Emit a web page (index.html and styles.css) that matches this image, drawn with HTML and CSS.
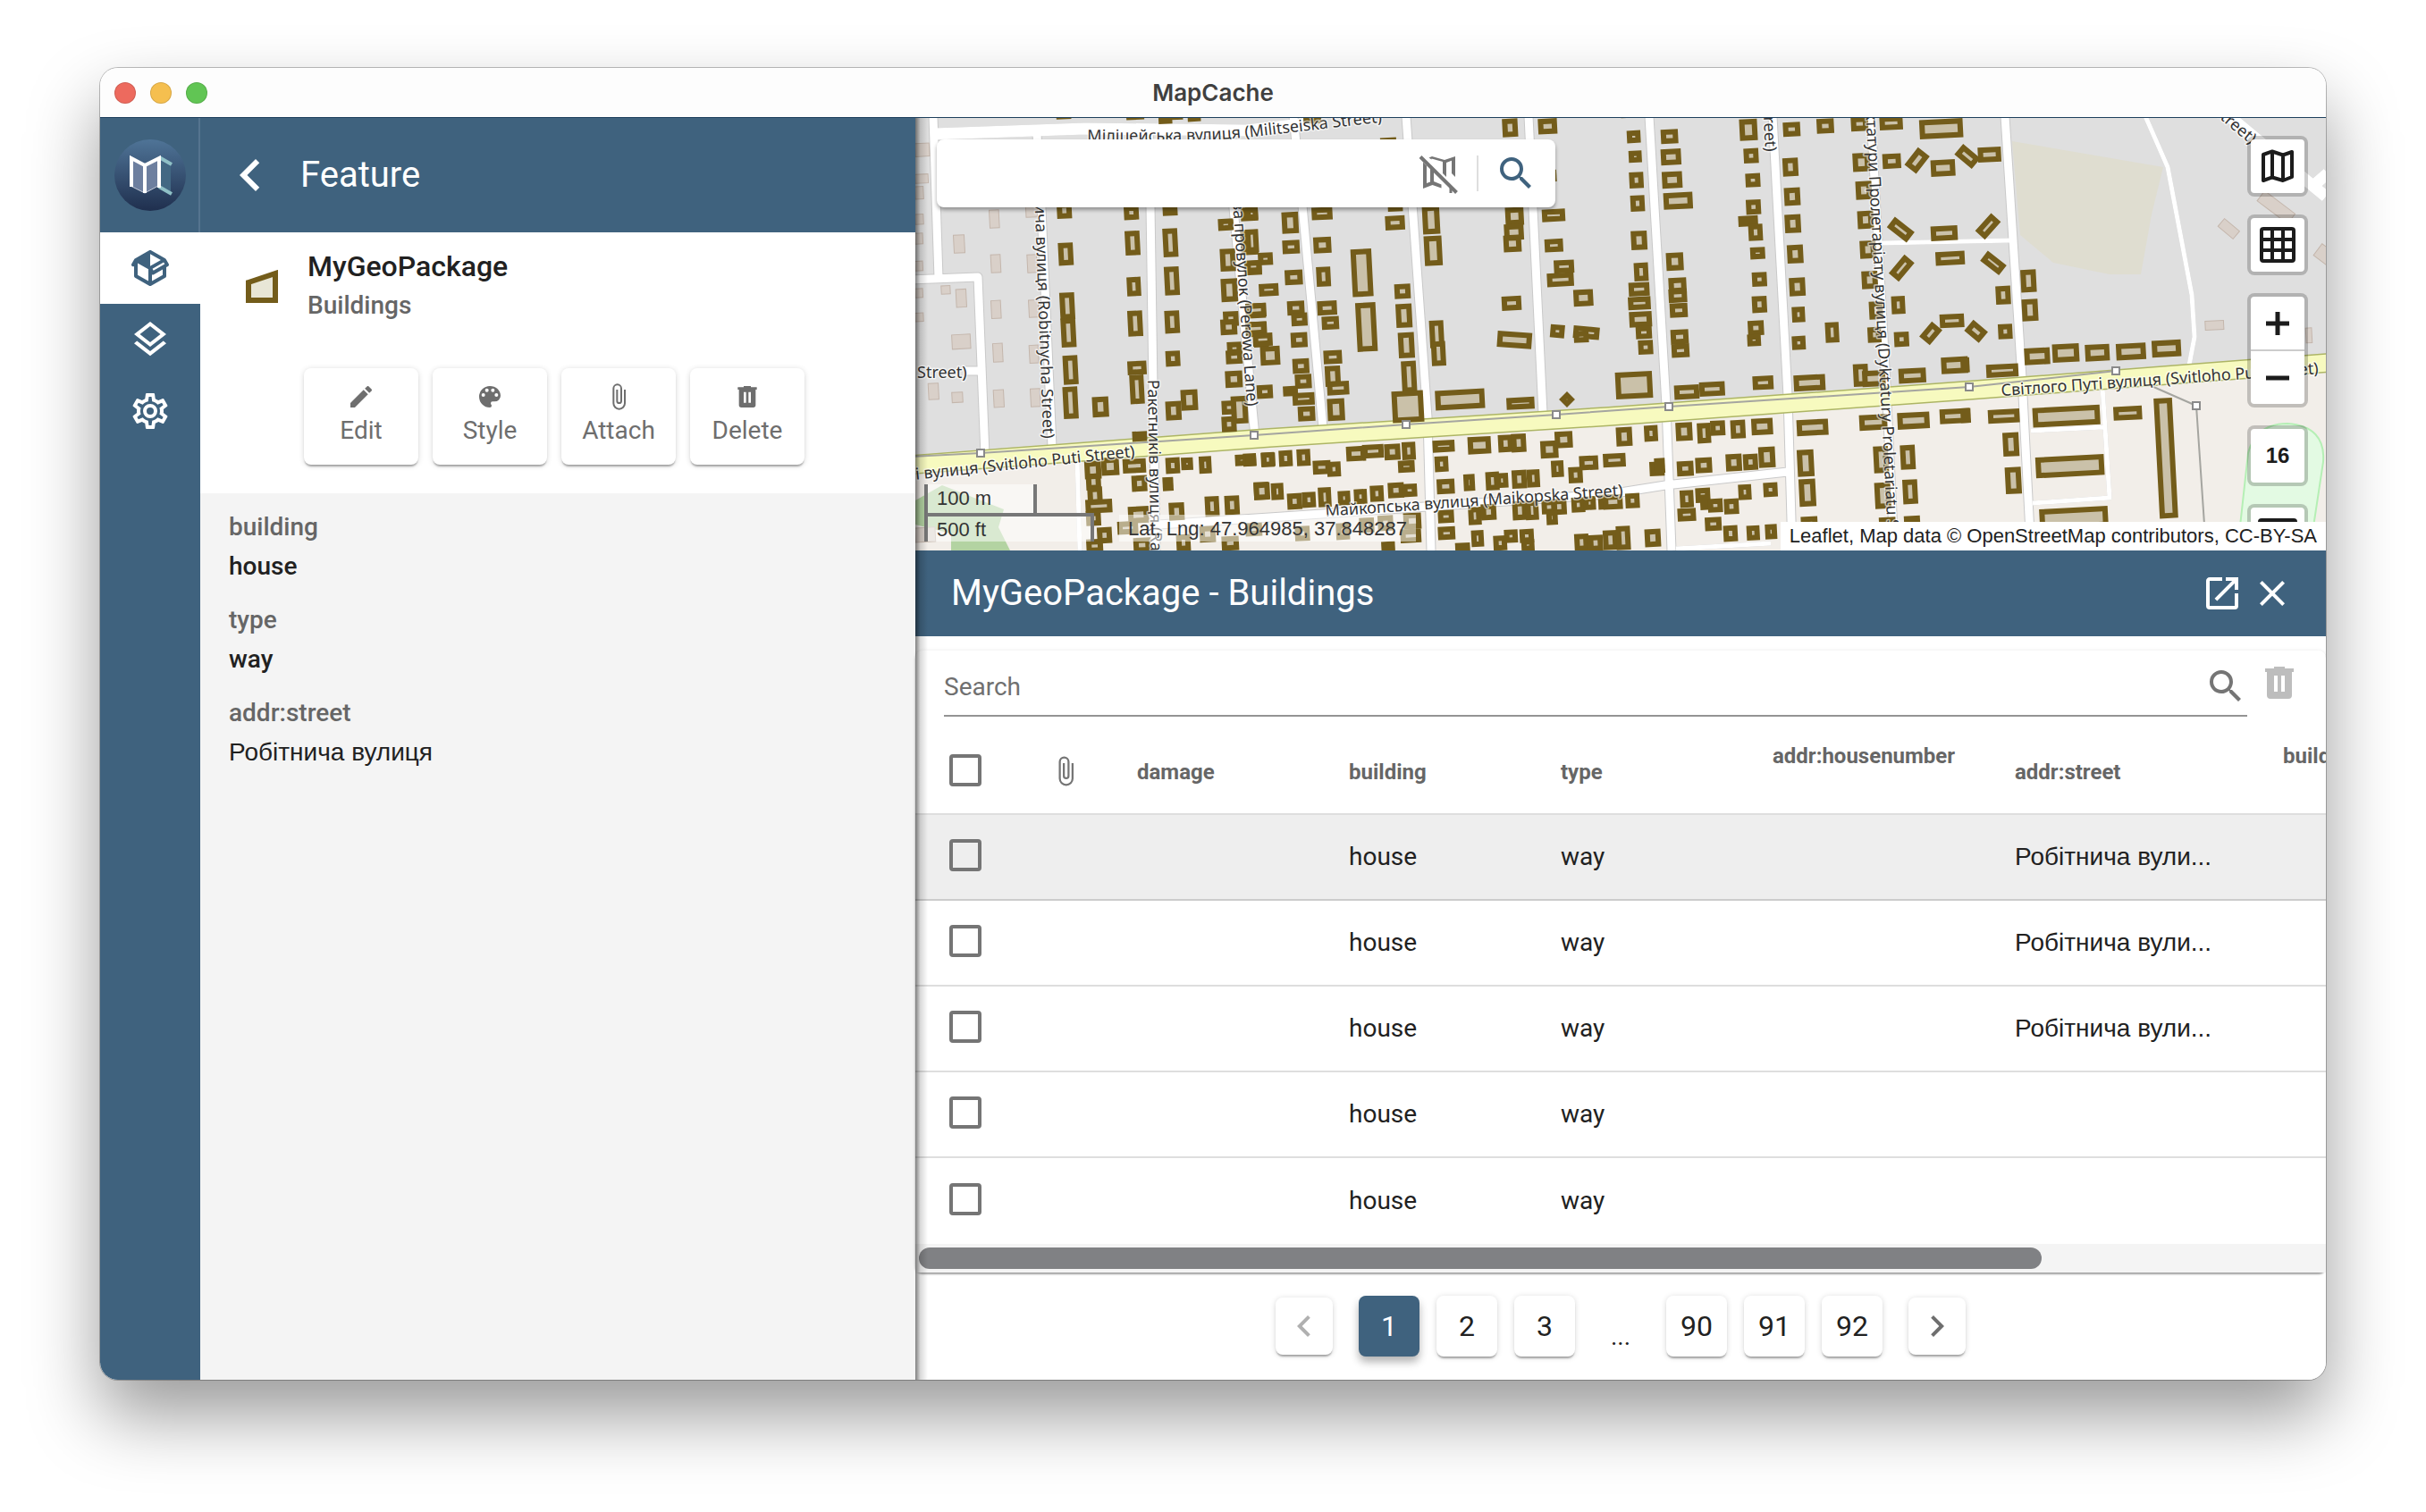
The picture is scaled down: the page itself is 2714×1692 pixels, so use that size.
FILE: index.html
```html
<!DOCTYPE html>
<html lang="en">
<head>
<meta charset="utf-8">
<title>MapCache</title>
<link rel="stylesheet" href="styles.css">
</head>
<body>
<svg width="0" height="0" class="sprite" aria-hidden="true">
  <symbol id="i-package" viewBox="0 0 24 24"><path d="M2,10.96C1.5,10.68 1.35,10.07 1.63,9.59L3.13,7C3.24,6.8 3.41,6.66 3.6,6.58L11.43,2.18C11.59,2.06 11.79,2 12,2C12.21,2 12.41,2.06 12.57,2.18L20.47,6.62C20.66,6.72 20.82,6.88 20.91,7.08L22.36,9.6C22.64,10.08 22.47,10.69 22,10.96L21,11.54V16.5C21,16.88 20.79,17.21 20.47,17.38L12.57,21.82C12.41,21.94 12.21,22 12,22C11.79,22 11.59,21.94 11.43,21.82L3.53,17.38C3.21,17.21 3,16.88 3,16.5V10.96C2.7,11.13 2.32,11.14 2,10.96M12,4.15L12,10.85L17.96,7.5L12,4.15M5,15.91L11,19.29V12.58L5,9.21V15.91M19,15.91V12.69L14,15.59C13.67,15.77 13.3,15.76 13,15.6V19.29L19,15.91M13.85,13.36L20.13,9.73L19.55,8.72L13.27,12.35L13.85,13.36Z"/></symbol>
  <symbol id="i-layers" viewBox="0 0 24 24"><path d="M12,18.54L19.37,12.8L21,14.07L12,21.07L3,14.07L4.62,12.81L12,18.54M12,16L3,9L12,2L21,9L12,16M12,4.53L6.26,9L12,13.47L17.74,9L12,4.53Z"/></symbol>
  <symbol id="i-cog" viewBox="0 0 24 24"><path d="M12,8A4,4 0 0,1 16,12A4,4 0 0,1 12,16A4,4 0 0,1 8,12A4,4 0 0,1 12,8M12,10A2,2 0 0,0 10,12A2,2 0 0,0 12,14A2,2 0 0,0 14,12A2,2 0 0,0 12,10M10,22C9.75,22 9.54,21.82 9.5,21.58L9.13,18.93C8.5,18.68 7.96,18.34 7.44,17.94L4.95,18.95C4.73,19.03 4.46,18.95 4.34,18.73L2.34,15.27C2.21,15.05 2.27,14.78 2.46,14.63L4.57,12.97L4.5,12L4.57,11L2.46,9.37C2.27,9.22 2.21,8.95 2.34,8.73L4.34,5.27C4.46,5.05 4.73,4.96 4.95,5.05L7.44,6.05C7.96,5.66 8.5,5.32 9.13,5.07L9.5,2.42C9.54,2.18 9.75,2 10,2H14C14.25,2 14.46,2.18 14.5,2.42L14.87,5.07C15.5,5.32 16.04,5.66 16.56,6.05L19.05,5.05C19.27,4.96 19.54,5.05 19.66,5.27L21.66,8.73C21.79,8.95 21.73,9.22 21.54,9.37L19.43,11L19.5,12L19.43,13L21.54,14.63C21.73,14.78 21.79,15.05 21.66,15.27L19.66,18.73C19.54,18.95 19.27,19.04 19.05,18.95L16.56,17.95C16.04,18.34 15.5,18.68 14.87,18.93L14.5,21.58C14.46,21.82 14.25,22 14,22H10M11.25,4L10.88,6.61C9.68,6.86 8.62,7.5 7.85,8.39L5.44,7.35L4.69,8.65L6.8,10.2C6.4,11.37 6.4,12.64 6.8,13.8L4.68,15.36L5.43,16.66L7.86,15.62C8.63,16.5 9.68,17.14 10.87,17.38L11.24,20H12.76L13.13,17.39C14.32,17.14 15.37,16.5 16.14,15.62L18.57,16.66L19.32,15.36L17.2,13.81C17.6,12.64 17.6,11.37 17.2,10.2L19.31,8.65L18.56,7.35L16.15,8.39C15.38,7.5 14.32,6.86 13.12,6.62L12.75,4H11.25Z"/></symbol>
  <symbol id="i-left" viewBox="0 0 24 24"><path d="M15.41,16.58L10.83,12L15.41,7.41L14,6L8,12L14,18L15.41,16.58Z"/></symbol>
  <symbol id="i-right" viewBox="0 0 24 24"><path d="M8.59,16.58L13.17,12L8.59,7.41L10,6L16,12L10,18L8.59,16.58Z"/></symbol>
  <symbol id="i-pencil" viewBox="0 0 24 24"><path d="M20.71,7.04C21.1,6.65 21.1,6 20.71,5.63L18.37,3.29C18,2.9 17.35,2.9 16.96,3.29L15.12,5.12L18.87,8.87M3,17.25V21H6.75L17.81,9.93L14.06,6.18L3,17.25Z"/></symbol>
  <symbol id="i-palette" viewBox="0 0 24 24"><path d="M17.5,12A1.5,1.5 0 0,1 16,10.5A1.5,1.5 0 0,1 17.5,9A1.5,1.5 0 0,1 19,10.5A1.5,1.5 0 0,1 17.5,12M14.5,8A1.5,1.5 0 0,1 13,6.5A1.5,1.5 0 0,1 14.5,5A1.5,1.5 0 0,1 16,6.5A1.5,1.5 0 0,1 14.5,8M9.5,8A1.5,1.5 0 0,1 8,6.5A1.5,1.5 0 0,1 9.5,5A1.5,1.5 0 0,1 11,6.5A1.5,1.5 0 0,1 9.5,8M6.5,12A1.5,1.5 0 0,1 5,10.5A1.5,1.5 0 0,1 6.5,9A1.5,1.5 0 0,1 8,10.5A1.5,1.5 0 0,1 6.5,12M12,3A9,9 0 0,0 3,12A9,9 0 0,0 12,21A1.5,1.5 0 0,0 13.5,19.5C13.5,19.11 13.35,18.76 13.11,18.5C12.88,18.23 12.73,17.88 12.73,17.5A1.5,1.5 0 0,1 14.23,16H16A5,5 0 0,0 21,11C21,6.58 16.97,3 12,3Z"/></symbol>
  <symbol id="i-clip" viewBox="0 0 24 24"><path d="M16.5,6V17.5A4,4 0 0,1 12.5,21.5A4,4 0 0,1 8.5,17.5V5A2.5,2.5 0 0,1 11,2.5A2.5,2.5 0 0,1 13.5,5V15.5A1,1 0 0,1 12.5,16.5A1,1 0 0,1 11.5,15.5V6H10V15.5A2.5,2.5 0 0,0 12.5,18A2.5,2.5 0 0,0 15,15.5V5A4,4 0 0,0 11,1A4,4 0 0,0 7,5V17.5A5.5,5.5 0 0,0 12.5,23A5.5,5.5 0 0,0 18,17.5V6H16.5Z"/></symbol>
  <symbol id="i-trash" viewBox="0 0 24 24"><path d="M9,3V4H4V6H5V19A2,2 0 0,0 7,21H17A2,2 0 0,0 19,19V6H20V4H15V3H9M9,8H11V17H9V8M13,8H15V17H13V8Z"/></symbol>
  <symbol id="i-search" viewBox="0 0 24 24"><path d="M9.5,3A6.5,6.5 0 0,1 16,9.5C16,11.11 15.41,12.59 14.44,13.73L14.71,14H15.5L20.5,19L19,20.5L14,15.5V14.71L13.73,14.44C12.59,15.41 11.11,16 9.5,16A6.5,6.5 0 0,1 3,9.5A6.5,6.5 0 0,1 9.5,3M9.5,5C7,5 5,7 5,9.5C5,12 7,14 9.5,14C12,14 14,12 14,9.5C14,7 12,5 9.5,5Z"/></symbol>
  <symbol id="i-open" viewBox="0 0 24 24"><path d="M14,3V5H17.59L7.76,14.83L9.17,16.24L19,6.41V10H21V3M19,19H5V5H12V3H5C3.89,3 3,3.9 3,5V19A2,2 0 0,0 5,21H19A2,2 0 0,0 21,19V12H19V19Z"/></symbol>
  <symbol id="i-close" viewBox="0 0 24 24"><path d="M19,6.41L17.59,5L12,10.59L6.41,5L5,6.41L10.59,12L5,17.59L6.41,19L12,13.41L17.59,19L19,17.59L13.41,12L19,6.41Z"/></symbol>
  <symbol id="i-map-off" viewBox="0 0 48 48"><path d="M6 11.500V41l10.500-4 10 3.500v-4L18 33V20l-4-4v17.500l-4 1.500V15.500zM12.500 6.500l3 2V7.500L28 11v13l4 4V12l6-2.300V24l4 4V5l-12 4-14-4z"/><path d="M3 5.500 43.500 45.500" stroke="currentColor" stroke-width="4" fill="none"/><path d="M37 38v8" stroke="currentColor" stroke-width="3"/></symbol>
  <symbol id="i-map" viewBox="0 0 48 48"><path d="M8 11 18 7.500 30 11.500 40 8V36L30 40 18 36.500 8 40ZM18 8V36M30 12V39" fill="none" stroke="currentColor" stroke-width="4" stroke-linejoin="round"/></symbol>
  <symbol id="i-grid" viewBox="0 0 48 48"><path d="M8 4H40A4 4 0 0 1 44 8V40A4 4 0 0 1 40 44H8A4 4 0 0 1 4 40V8A4 4 0 0 1 8 4M8 8V16H16V8ZM20 8V16H28V8ZM32 8V16H40V8ZM8 20V28H16V20ZM20 20V28H28V20ZM32 20V28H40V20ZM8 32V40H16V32ZM20 32V40H28V32ZM32 32V40H40V32Z" fill-rule="evenodd"/></symbol>
</svg>

<div class="window">
  <header class="titlebar">
    <div class="lights"><span class="light red"></span><span class="light amber"></span><span class="light green"></span></div>
    <h1 class="app-name">MapCache</h1>
  </header>
  <div class="app">
    <nav class="rail" aria-label="Main">
      <div class="brand">
        <svg class="logo" viewBox="0 0 80 80" aria-hidden="true">
          <defs><linearGradient id="lg" x1="0" y1="0" x2="0" y2="1"><stop offset="0" stop-color="#4f7497"/><stop offset="1" stop-color="#1f2f4e"/></linearGradient></defs>
          <circle cx="40" cy="40" r="40" fill="url(#lg)"/>
          <path d="M18 20 34 28V60L18 52ZM34 28 49 20V52L34 60Z" fill="#6d7f9f"/>
          <path d="M51 24 63 30V58L51 52Z" fill="#426883"/>
          <path d="M50 20 64 28M50 53 64 61" stroke="#8fc0c6" stroke-width="4" fill="none"/>
          <path d="M18 52 34 60 49 52" fill="none" stroke="#c4cbd9" stroke-width="1"/>
          <path d="M19 53V21L34 29 50 21V54M34 29V60" fill="none" stroke="#fff" stroke-width="4"/>
        </svg>
      </div>
      <a class="rail-item active" href="#geopackages" aria-label="GeoPackages"><svg class="icon"><use href="#i-package"/></svg></a>
      <a class="rail-item" href="#layers" aria-label="Layers"><svg class="icon"><use href="#i-layers"/></svg></a>
      <a class="rail-item" href="#settings" aria-label="Settings"><svg class="icon"><use href="#i-cog"/></svg></a>
    </nav>

    <section class="panel">
      <div class="panel-bar">
        <button class="plain" aria-label="Back"><svg class="icon-xl"><use href="#i-left"/></svg></button>
        <h2 class="bar-title">Feature</h2>
      </div>
      <div class="summary">
        <div class="ident">
          <svg class="geom" viewBox="0 0 36 38" aria-hidden="true"><path d="M3 14 33 4V34H3Z" fill="#e8e6d6" stroke="#735c1a" stroke-width="6"/></svg>
          <div>
            <h3 class="name">MyGeoPackage</h3>
            <p class="table-name">Buildings</p>
          </div>
        </div>
        <div class="actions">
          <button class="action"><svg class="icon-s"><use href="#i-pencil"/></svg>Edit</button>
          <button class="action"><svg class="icon-s"><use href="#i-palette"/></svg>Style</button>
          <button class="action"><svg class="icon-s"><use href="#i-clip"/></svg>Attach</button>
          <button class="action"><svg class="icon-s"><use href="#i-trash"/></svg>Delete</button>
        </div>
      </div>
      <dl class="attrs">
        <div><dt>building</dt><dd>house</dd></div>
        <div><dt>type</dt><dd>way</dd></div>
        <div><dt>addr:street</dt><dd class="cyr">Робітнича вулиця</dd></div>
      </dl>
    </section>

    <main class="main">
      <section class="map" aria-label="Map">
        <svg class="map-canvas" viewBox="0 0 1578 484" preserveAspectRatio="xMidYMid slice">
          <rect width="1578" height="484" fill="#dfdfdf"/>
          <path d="M0 388 396 358 776 334 1176 305 1578 275V484H0Z" fill="#f2eee9"/>
          <path d="M1227 26 1396 55 1383 108 1371 175 1336 175 1273 162 1236 131Z" fill="#dfddd0"/>
          <path d="M0 428 30 411 99 438 93 458 106 484H40V465L0 455Z" fill="#b3d3a2"/>
          <path d="M1479 484 1491 375Q1500 342 1535 342 1578 345 1575 385L1560 484Z" fill="#e3fae3" stroke="#b5efb5" stroke-width="2"/>
          <g class="casing">
            <path id="roads" d="M20-2 26 179M-4 181 70 178 78 377M56 283H73M136 18 141 101 153 368M261 10 263 98 267 370 269 484M350 16 356 101 380 357M423-2 433 98 456 347M549-2 573 335 577 484M686-2 702 330M821-2 840 321 846 484M959-2 976 311 981 484M1069-2 1086 298 1095 484M1219-2 1238 291 1248 484M272 455 396 447 776 421 839 411 976 396"/>
            <path id="wide" d="M20 18 190 12 370 14 440 6M1460-10 1578 88M1565 75 1580 62"/>
            <path id="lanes" d="M1081 140 1226 137M1376-2 1401 55 1428 198 1431 245 1424 282M1328 301 1336 425 1250 431M1248 350 1329 346M181 381 184 484M851 482 957 476"/>
          </g>
          <g class="surface"><use href="#roads"/><use href="#wide"/><use href="#lanes"/></g>
          <path class="main-casing" d="M-4 388 396 358 776 334 1176 305 1582 274"/>
          <path class="main-road" d="M-4 388 396 358 776 334 1176 305 1582 274"/>
          <path class="power" d="M-4 379 73 375 379 355 549 343 717 332 843 323 1179 301 1343 283M1383 300 1433 322 1444 484"/>
          <g id="plain-buildings" class="plain-buildings"></g>
          <g id="buildings" class="buildings"></g>
          <g id="nodes" class="nodes"></g>
          <g class="labels">
            <path id="curve" d="M192 26C260 26 320 27 378 21L545 2" fill="none" stroke="none"/>
            <text><textPath href="#curve">Міліцейська вулиця (Militseiska Street)</textPath></text>
            <text x="2" y="291">Street)</text>
            <text class="end" transform="translate(143 359) rotate(88)">Робітнича вулиця (Robitnycha Street)</text>
            <text transform="translate(260 293) rotate(89)">Ракетників вулиця (Raketnykiv Street)</text>
            <text class="end" transform="translate(371 323) rotate(86)">Перова провулок (Perowa Lane)</text>
            <text class="end" transform="translate(951 38) rotate(87)">Street)</text>
            <text transform="translate(1062 -31) rotate(87)">Диктатури Пролетаріату вулиця (Dyktatury Proletariatu Street)</text>
            <text transform="translate(1215 311) rotate(-4)">Світлого Путі вулиця (Svitloho Puti Street)</text>
            <text class="end" transform="translate(246 379) rotate(-6)">Світлого Путі вулиця (Svitloho Puti Street)</text>
            <text transform="translate(459 446) rotate(-4)">Майкопська вулиця (Maikopska Street)</text>
            <text class="end" transform="translate(1494 30) rotate(40)">Street)</text>
          </g>
        </svg>

        <form class="map-search" role="search">
          <input type="text" aria-label="Search the map">
          <button class="plain muted" type="button" aria-label="Hide results"><svg class="icon"><use href="#i-map-off"/></svg></button>
          <span class="rule"></span>
          <button class="plain accent" type="button" aria-label="Search"><svg class="icon"><use href="#i-search"/></svg></button>
        </form>

        <div class="controls">
          <button class="ctl" aria-label="Base maps"><svg class="icon"><use href="#i-map"/></svg></button>
          <button class="ctl" aria-label="Grid"><svg class="icon"><use href="#i-grid"/></svg></button>
          <div class="ctl pair">
            <button aria-label="Zoom in"><svg class="icon-t" viewBox="0 0 26 26"><path d="M13 0V26M0 13H26" stroke="#1c1c1c" stroke-width="5"/></svg></button>
            <button aria-label="Zoom out"><svg class="icon-t" viewBox="0 0 26 26"><path d="M0 13H26" stroke="#1c1c1c" stroke-width="5"/></svg></button>
          </div>
          <div class="ctl level">16</div>
          <button class="ctl" aria-label="Layers order"><svg class="icon" viewBox="0 0 48 48"><path d="M2 36V10Q2 6 6 6H42Q46 6 46 10V36Z"/></svg></button>
        </div>

        <div class="readouts">
          <div class="scale"><div class="metric">100 m</div><div class="imperial">500 ft</div></div>
          <div class="coords">Lat, Lng: 47.964985, 37.848287</div>
        </div>
        <div class="credit">Leaflet, Map data © OpenStreetMap contributors, CC-BY-SA</div>
      </section>

      <section class="data">
        <div class="data-bar">
          <h2 class="bar-title">MyGeoPackage - Buildings</h2>
          <button class="plain" aria-label="Open in window"><svg class="icon"><use href="#i-open"/></svg></button>
          <button class="plain" aria-label="Close"><svg class="icon"><use href="#i-close"/></svg></button>
        </div>
        <div class="card">
          <div class="filter">
            <label class="field">
              <input type="text" placeholder="Search" aria-label="Search rows">
              <svg class="icon"><use href="#i-search"/></svg>
            </label>
            <button class="plain faded" aria-label="Delete rows" disabled><svg class="icon"><use href="#i-trash"/></svg></button>
          </div>
          <div class="scroller">
            <table>
              <colgroup><col class="c-check"><col class="c-clip"><col class="c-std"><col class="c-std"><col class="c-std"><col class="c-num"><col class="c-street"><col class="c-last"></colgroup>
              <thead><tr>
                <th><input type="checkbox" aria-label="Select all"></th>
                <th class="clip"><svg class="icon-c"><use href="#i-clip"/></svg></th>
                <th>damage</th><th>building</th><th>type</th>
                <th class="raised">addr:housenumber</th><th>addr:street</th><th class="raised">building:levels</th>
              </tr></thead>
              <tbody>
                <tr class="hover"><td><input type="checkbox" aria-label="Select row 1"></td><td></td><td></td><td>house</td><td>way</td><td></td><td class="cyr">Робітнича вули...</td><td></td></tr>
                <tr><td><input type="checkbox" aria-label="Select row 2"></td><td></td><td></td><td>house</td><td>way</td><td></td><td class="cyr">Робітнича вули...</td><td></td></tr>
                <tr><td><input type="checkbox" aria-label="Select row 3"></td><td></td><td></td><td>house</td><td>way</td><td></td><td class="cyr">Робітнича вули...</td><td></td></tr>
                <tr><td><input type="checkbox" aria-label="Select row 4"></td><td></td><td></td><td>house</td><td>way</td><td></td><td></td><td></td></tr>
                <tr><td><input type="checkbox" aria-label="Select row 5"></td><td></td><td></td><td>house</td><td>way</td><td></td><td></td><td></td></tr>
              </tbody>
            </table>
          </div>
          <div class="track"><div class="thumb"></div></div>
        </div>
        <nav class="pager" aria-label="Pages">
          <button class="step" disabled aria-label="Previous page"><svg class="icon-b"><use href="#i-left"/></svg></button>
          <button class="page current">1</button>
          <button class="page">2</button>
          <button class="page">3</button>
          <span class="more">...</span>
          <button class="page">90</button>
          <button class="page">91</button>
          <button class="page">92</button>
          <button class="step" aria-label="Next page"><svg class="icon-b"><use href="#i-right"/></svg></button>
        </nav>
      </section>
    </main>
  </div>
</div>
<script src="map.js"></script>
</body>
</html>
```
FILE: styles.css
```css
* { box-sizing: border-box; }

body {
  margin: 0;
  min-height: 100vh;
  padding: 76px 112px 148px;
  display: flex;
  background: #fff;
  color: #212121;
  font-family: Roboto, "Liberation Sans", sans-serif;
  font-size: 28px;
  line-height: 40px;
}

h1, h2, h3, p, dl, dd { margin: 0; }
button, input { font: inherit; color: inherit; }
button { border: 0; padding: 0; background: none; }
svg { display: block; fill: currentColor; }
.sprite { position: absolute; }

.icon { width: 48px; height: 48px; }
.icon-xl { width: 72px; height: 72px; }
.icon-s { width: 32px; height: 32px; }
.icon-c { width: 36px; height: 36px; }
.icon-b { width: 48px; height: 48px; }
.icon-t { width: 26px; height: 26px; }
.plain { display: flex; flex: none; }
.cyr { font-family: "Liberation Sans", Arial, sans-serif; }

.window {
  flex: 1;
  min-width: 0;
  display: flex;
  flex-direction: column;
  border-radius: 20px;
  overflow: hidden;
  box-shadow: 0 0 0 1px rgba(0, 0, 0, .25), 0 40px 80px rgba(0, 0, 0, .4);
}

.titlebar {
  height: 56px;
  display: grid;
  grid-template-columns: 1fr auto 1fr;
  align-items: center;
  padding: 0 16px;
  background: #fdfdfd;
  border-bottom: 1px solid #1d3f5c;
}
.lights { display: flex; gap: 16px; }
.light { width: 24px; height: 24px; border-radius: 50%; border: 1px solid rgba(0, 0, 0, .12); }
.red { background: #ed6a5e; }
.amber { background: #f5bf4f; }
.green { background: #61c554; }
.app-name { font: 600 26px/32px Inter, sans-serif; color: #404040; }

.app { flex: 1; display: flex; background: #fff; }

.rail { width: 112px; flex: none; background: #3f627e; color: #fff; }
.brand {
  height: 128px;
  padding: 24px 14px 24px 16px;
  border-right: 2px solid #55748f;
}
.logo { width: 80px; height: 80px; }
.rail-item { height: 80px; display: flex; align-items: center; justify-content: center; color: #fff; }
.rail-item.active { background: #fff; color: #3f627e; }

.panel { width: 800px; flex: none; display: flex; flex-direction: column; background: #f4f4f4; }
.panel-bar {
  height: 128px;
  display: flex;
  align-items: center;
  gap: 20px;
  padding-left: 20px;
  background: #3f627e;
  color: #fff;
}
.bar-title { font-size: 40px; line-height: 48px; font-weight: 400; }
.summary { height: 292px; padding: 16px 0 0 51px; background: #fff; }
.ident { display: flex; gap: 33px; }
.geom { width: 36px; height: 38px; margin-top: 26px; }
.name { font-size: 32px; line-height: 44px; font-weight: 500; }
.table-name { line-height: 44px; font-weight: 500; color: #666; }
.actions { display: flex; gap: 16px; padding: 48px 0 0 65px; }
.action {
  width: 128px;
  height: 108px;
  padding-top: 16px;
  display: flex;
  flex-direction: column;
  align-items: center;
  gap: 2px;
  border-radius: 8px;
  background: #fff;
  color: #6e6e6e;
  box-shadow: 0 3px 2px -1px rgba(0, 0, 0, .3), 0 1px 6px rgba(0, 0, 0, .16);
}
.attrs { padding: 16px 32px; font-weight: 500; }
.attrs div { padding-bottom: 16px; }
.attrs dt, .attrs dd { line-height: 44px; }
.attrs dt { color: #666; }
.attrs .cyr { font-weight: 400; }

.main {
  flex: 1;
  min-width: 0;
  display: flex;
  flex-direction: column;
  position: relative;
}
/* shade cast by the side panel */
.main::before {
  content: "";
  position: absolute;
  inset: 0 auto 0 0;
  width: 14px;
  z-index: 3;
  background: linear-gradient(90deg, rgba(0, 0, 0, .5), rgba(0, 0, 0, .15) 40%, transparent);
}

.map { flex: 1; min-height: 484px; position: relative; overflow: hidden; font-family: "Liberation Sans", Arial, sans-serif; }
.map-canvas { position: absolute; inset: 0; width: 100%; height: 100%; }
.casing, .surface { fill: none; stroke-linejoin: round; }
.casing { stroke: #c9c9c9; stroke-width: 11px; }
.surface { stroke: #fff; stroke-width: 9px; }
#lanes { stroke-width: 5px; }
#wide { stroke-width: 13px; }
.main-casing { fill: none; stroke: #adb565; stroke-width: 22px; }
.main-road { fill: none; stroke: #f7fabf; stroke-width: 19px; }
.power { fill: none; stroke: #a5a5a0; stroke-width: 2px; }
.plain-buildings { fill: #d9d0c9; stroke: #c4b6ac; stroke-width: 3px; }
.buildings { fill: #cac1a9; stroke: #735c1a; stroke-width: 18px; }
.nodes { fill: #fff; stroke: #8a8a8a; stroke-width: 2px; }
.labels {
  font: 18px "Noto Sans", "Open Sans", sans-serif;
  fill: #333;
  stroke: rgba(255, 255, 255, .6);
  stroke-width: 3px;
  stroke-linejoin: round;
  paint-order: stroke;
}
.labels .end { text-anchor: end; }

.map-search {
  position: absolute;
  top: 24px;
  left: 24px;
  width: 692px;
  height: 76px;
  padding: 0 20px;
  display: flex;
  align-items: center;
  gap: 18px;
  border-radius: 8px;
  background: #fff;
  box-shadow: 0 3px 4px rgba(0, 0, 0, .35);
}
.map-search input { flex: 1; min-width: 0; border: 0; outline: 0; background: none; }
.rule { width: 2px; height: 40px; background: #dedede; }
.muted { color: #757575; }
.accent { color: #3f627e; }

.controls { position: absolute; top: 20px; right: 20px; display: grid; gap: 20px; }
.ctl {
  width: 68px;
  height: 68px;
  display: flex;
  align-items: center;
  justify-content: center;
  border: 4px solid rgba(0, 0, 0, .2);
  border-radius: 8px;
  background: #fff;
  background-clip: padding-box;
  color: #1c1c1c;
}
.ctl.pair { height: 128px; flex-direction: column; }
.pair button { flex: 1; width: 60px; display: flex; align-items: center; justify-content: center; }
.pair button + button { border-top: 2px solid #ccc; }
.level { font-size: 24px; font-weight: 700; }

.readouts { position: absolute; left: 10px; bottom: 10px; display: flex; align-items: flex-end; gap: 28px; color: #333; }
.scale { width: 190px; font-size: 22px; line-height: 32px; }
.scale div { height: 32px; padding-left: 10px; border: 0 solid #777; background: rgba(255, 255, 255, .5); }
.scale .metric { width: 126px; border-width: 0 4px; }
.scale .imperial { border-width: 4px 4px 0; line-height: 30px; }
.coords { height: 30px; padding: 0 10px; font-size: 22px; line-height: 32px; background: rgba(255, 255, 255, .5); }
.credit {
  position: absolute;
  right: 0;
  bottom: 0;
  height: 32px;
  padding: 0 10px;
  font-size: 22px;
  line-height: 32px;
  background: #fff;
}

.data-bar {
  height: 96px;
  display: flex;
  align-items: center;
  gap: 8px;
  padding: 0 36px 0 40px;
  background: #3f627e;
  color: #fff;
}
.data-bar .bar-title { flex: 1; }
.card {
  margin-top: 16px;
  border-radius: 8px;
  background: #fff;
  box-shadow: 0 2px 2px rgba(0, 0, 0, .35), 0 0 4px rgba(0, 0, 0, .08);
}
.filter { height: 88px; padding: 0 28px 0 32px; display: flex; gap: 12px; align-items: flex-start; }
.filter > .plain { padding-top: 12px; }
.field { flex: 1; height: 74px; padding-top: 8px; display: flex; align-items: center; border-bottom: 2px solid #949494; color: #757575; }
.field input { flex: 1; min-width: 0; border: 0; padding: 2px 0 0; outline: 0; background: none; }
.field input::placeholder { color: #707070; opacity: 1; }
.faded { color: #bdbdbd; }

.scroller { overflow: hidden; }
table { width: 1970px; table-layout: fixed; border-collapse: separate; border-spacing: 0; }
.c-check { width: 120px; }
.c-clip { width: 96px; }
.c-std { width: 237px; }
.c-num { width: 271px; }
.c-street { width: 300px; }
th, td { height: 96px; padding: 0 32px; text-align: left; border-bottom: 2px solid #dedede; white-space: nowrap; }
th { font-size: 24px; line-height: 32px; font-weight: 700; color: #666; padding-top: 2px; }
th.raised { padding-bottom: 36px; }
th.clip { padding: 0 30px; color: #757575; }
tbody tr:last-child td { border-bottom: 0; }
.hover td { background: #eee; border-color: #ccc; }
input[type="checkbox"] {
  appearance: none;
  display: block;
  width: 36px;
  height: 36px;
  margin: 0 0 4px 6px;
  border: 4px solid #757575;
  border-radius: 4px;
}
.track { height: 32px; padding: 4px; background: #f4f4f4; }
.thumb { width: 80%; height: 24px; border-radius: 12px; background: #808184; }

.pager { height: 120px; display: flex; align-items: center; justify-content: center; gap: 19px; }
.pager button {
  border-radius: 8px;
  background: #fff;
  box-shadow: 0 3px 2px -1px rgba(0, 0, 0, .3), 0 1px 6px rgba(0, 0, 0, .16);
}
.page { width: 68px; height: 68px; font-size: 32px; }
.pager .current { background: #3f627e; color: #fff; box-shadow: 0 6px 10px rgba(0, 0, 0, .3); }
.step { width: 64px; height: 64px; display: flex; align-items: center; justify-content: center; color: #6e6e6e; }
.step:disabled { color: #b0b0b0; }
.step:first-child { margin-right: 10px; }
.step:last-child { margin-left: 10px; }
.more { width: 64px; height: 64px; padding-top: 24px; text-align: center; }
```
FILE: map.js
```js
// Building footprints, one tile per entry: offset of the tile on the map, then
// "x y width height [angle]" in thirds of a map unit.
const tiles = [
  { x: -4, y: -2, list: `487 290 50 54;492 425 50 76;497 592 50 90;501 678 50 98;508 803 50 98;508 908 50 108;606 942 55 68;
    712 300 50 48;716 385 50 82;722 540 47 64;725 653 50 86;724 822 64 46;732 868 48 98;740 1058 50 34;
    842 300 50 34;843 377 50 96;848 505 50 96;849 653 50 76;852 788 49 52;903 918 57 70;852 957 53 64;
    1028 344 52 40;1104 306 58 46;1104 382 58 84;1035 445 52 76;1117 485 58 48;1038 545 56 78;1045 655 52 50;1036 682 56 52;
    1058 758 50 42;1054 786 56 46;1052 855 58 56;1040 955 60 46;1072 940 56 92;1040 1008 50 52;1130 628 58 50;1132 690 60 50;1148 736 50 40;
    580 1158 56 60;585 1200 50 56;590 1244 50 60;636 1146 60 60;708 1150 78 48;738 1206 52 54;583 1286 90 46;585 1325 50 50;
    726 1310 70 56;690 1360 70 44;622 1380 50 54;586 1420 56 46;744 1415 58 50;
    852 1146 48 54;904 1146 40 42;964 1142 42 58;842 1212 36 46;1085 1136 44 38;1112 1132 44 44;1172 1130 48 46;
    984 1276 48 68;1050 1274 50 64;863 1297 52 60;1148 1228 50 60;888 1404 48 56;1040 1410 58 48;966 1376 54 54;1120 1366 56 44;
    485 -12 50 22;720 -10 60 22;828 -6 46 32;870 -12 40 24;926 -8 44 26` },
  { x: 376, y: -2, list: `-20 306 42 42;-20 380 44 78;102 322 56 72;104 416 58 46;22 458 50 42;-20 484 54 42;112 516 60 50;25 562 66 42;
    -20 628 70 46;-20 690 70 46;5 728 66 44;30 772 66 64;120 620 58 48;134 660 54 44;132 726 56 50;138 814 56 50;146 866 56 48;106 906 50 34;138 928 74 42;18 902 54 46;156 974 58 50;
    202 306 70 42;208 406 60 54;218 506 48 66;221 620 66 48;236 672 58 44;242 786 62 46;247 838 52 70;254 890 74 46;255 948 58 74;
    336 446 70 160;352 626 68 164;458 300 50 16;449 334 66 48;480 563 54 50;485 630 54 80;493 726 54 86;504 822 50 106;472 922 106 106;
    574 300 58 96;580 402 60 100;598 686 48 92;604 756 48 82;617 918 166 66;840 604 66 48;825 724 116 54 4;856 944 94 40;
    852 306 62 60;848 362 66 54;846 400 60 56;975 312 78 42;984 412 62 44;1015 483 68 44;992 526 90 46;1081 582 66 56;1003 700 48 44 5;1080 706 88 42 5;1082 722 50 38;1040 932 38 38 45;
    842 8 52 62;962 8 64 52;174 -14 60 38;432 72 54 20;1000 180 24 40;
    -20 1134 36 40;33 1128 44 50;92 1122 46 54;152 1118 46 56;206 1156 60 46;254 1160 46 50;318 1108 66 50;372 1102 72 46;446 1100 54 54;505 1094 46 60;492 1156 56 40;
    8 1230 54 58;66 1232 42 56;120 1266 50 54;170 1262 46 52;224 1246 44 66;290 1258 42 48;344 1252 44 50;398 1240 46 54;458 1230 54 52;506 1234 50 44;
    146 1376 50 50;284 1366 46 56;362 1348 50 50;424 1340 52 52;510 1332 60 54;500 1386 70 46;436 1428 46 36;
    608 1088 74 40;726 1076 78 58;828 1070 50 58;872 1066 50 62;615 1142 46 52;622 1218 60 50;712 1202 38 56;786 1194 46 62;820 1198 42 50;874 1188 50 62;924 1186 44 60;
    970 1090 60 58;1018 1058 60 56;1006 1156 42 56;1064 1178 48 54;1100 1140 64 48;626 1322 54 44;626 1378 58 44;728 1312 44 60;770 1302 52 54;876 1292 50 64;920 1290 44 66;
    974 1288 50 48;1008 1284 50 54;990 1324 38 48;1074 1280 46 50;1114 1276 42 46;1164 1270 50 50;738 1390 42 56;684 1432 50 36;812 1408 46 50;848 1388 46 44;900 1386 48 46;906 1420 44 40;1084 1402 48 58;1130 1406 50 54` },
  { x: 776, y: -2, list: `60 48 46 42;66 116 44 40;68 188 48 54;72 266 48 54;74 385 54 64;84 492 48 62;66 558 70 46;64 606 76 44;68 656 76 52;90 704 54 44;98 752 50 48;22 858 124 90;
    174 44 58 48;174 110 68 54;178 186 68 56;183 256 98 56;192 458 58 60;200 542 60 52;200 580 62 46;204 628 60 48;207 716 60 50;210 764 60 46;219 902 84 48;303 892 86 48;
    438 10 60 72;452 108 50 50;458 192 50 46;460 280 50 50;434 334 66 36;468 362 48 56;474 440 50 40;480 524 50 48;480 604 50 56;466 686 54 50;464 732 46 40;482 872 70 46;
    584 20 58 48;583 140 52 62;588 240 54 60;590 330 54 62;598 432 54 62;605 542 54 62;614 640 44 52;614 738 46 46;726 692 46 68;620 868 106 54;697 8 58 50;
    812 2 58 48;818 124 58 62;828 218 54 62;834 318 54 60;842 418 54 60;848 520 54 60;873 622 46 60;868 708 46 52;820 832 50 76;850 854 78 54;
    908 0 78 46;1042 10 146 64;918 126 62 50;1009 112 50 74 38;1080 146 82 56;937 359 84 44 38;960 469 44 82 40;1080 368 90 50;1096 454 98 46;948 604 46 60;957 724 50 50;1057 696 46 66 40;1110 664 82 46;972 846 92 50;1115 808 90 56;
    24 1044 54 64;118 1038 46 54;-20 1132 76 46;136 1160 50 48;152 1148 36 50;224 1028 56 62;296 1030 46 68;340 1022 50 50;408 1020 50 62;478 1014 72 56;228 1158 56 50;290 1146 56 52;392 1134 54 58;450 1134 50 54;502 1110 56 70;
    630 1018 106 54;632 1120 56 90;638 1218 56 92;644 1344 56 40;840 1002 94 52;968 994 108 56;1110 982 100 50;888 1108 50 90;978 1104 50 82;892 1230 54 88;986 1220 50 82;906 1346 56 30;990 1342 54 30;
    -20 1270 66 50;55 1266 48 50;238 1256 46 58;290 1248 50 50;306 1270 34 52;332 1284 50 46;386 1284 50 52;230 1316 62 44;434 1236 44 52;518 1230 48 48;322 1346 56 46;384 1374 48 54;462 1374 44 50;524 1370 40 50;
    -20 1390 50 66;24 1376 48 80;120 1386 54 60;40 -16 40 22` },
  { x: 1176, y: -2, list: `-35 112 76 46 40;38 104 78 50;50 330 44 80 42;50 472 80 42 38;182 515 52 76;186 614 54 74;98 570 50 62;106 698 48 50;0 698 64 48 40;
    194 778 86 56;288 764 90 62;398 766 82 56;502 762 100 56;622 752 98 56;66 832 108 44;-20 810 30 50;
    -20 980 34 50;72 984 106 46;222 974 226 66;493 974 96 46;638 946 62 404;122 1062 54 80;130 1178 54 90;232 1140 230 70;245 1314 230 70` }
];
const plain = [
  { x: -4, y: -2, list: `10 90 50 46;10 194 46 32;10 235 30 44;260 314 34 62;140 398 38 62;10 328 30 36;10 392 28 38;10 486 28 34;265 464 34 62;387 464 34 62;98 568 32 30;148 580 36 62;10 578 28 32;10 660 30 30;266 618 34 62;392 616 34 60;134 732 64 50;272 762 34 64;394 768 32 62;55 896 36 56;134 926 38 36;274 918 36 60;398 914 34 62;382 300 40 40;10 1380 70 50` },
  { x: 1176, y: -2, list: `974 284 130 44 37;846 360 68 36 40;1172 440 60 50 37;800 686 64 32;1138 710 22 52` }
];

const NS = "http://www.w3.org/2000/svg";
function draw(id, data, inset) {
  const root = document.getElementById(id);
  for (const tile of data) {
    const g = document.createElementNS(NS, "g");
    g.setAttribute("transform", `translate(${tile.x} ${tile.y}) scale(${1 / 3})`);
    for (const item of tile.list.split(";")) {
      const [x, y, w, h, a = -3] = item.trim().split(/\s+/).map(Number);
      const r = document.createElementNS(NS, "rect");
      r.setAttribute("x", x + inset);
      r.setAttribute("y", y + inset);
      r.setAttribute("width", Math.max(w - 2 * inset, 2));
      r.setAttribute("height", Math.max(h - 2 * inset, 2));
      r.setAttribute("transform", `rotate(${a} ${x + w / 2} ${y + h / 2})`);
      g.append(r);
    }
    root.append(g);
  }
}
draw("buildings", tiles, 9);
draw("plain-buildings", plain, 1);

// Power poles along the main street.
for (const [x, y] of [[73, 375], [379, 355], [549, 343], [717, 332], [843, 323], [1179, 301], [1343, 283], [1433, 322]]) {
  const r = document.createElementNS(NS, "rect");
  r.setAttribute("x", x - 4);
  r.setAttribute("y", y - 4);
  r.setAttribute("width", 8);
  r.setAttribute("height", 8);
  document.getElementById("nodes").append(r);
}
```
